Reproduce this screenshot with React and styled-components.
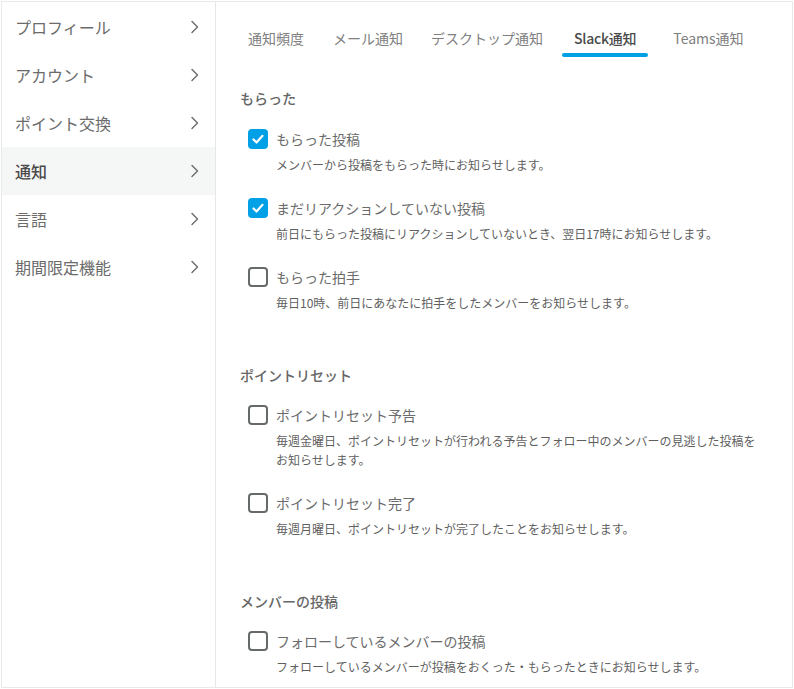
import React from "react";
import styled, { createGlobalStyle } from "styled-components";

const Global = createGlobalStyle`
  html, body { margin: 0; padding: 0; background: #fff; }
  body { font-family: "Noto Sans CJK JP", "Noto Sans", sans-serif; color: #5f5f5f; }
`;
const Frame = styled.div`
  box-sizing: border-box; width: 792px; height: 687px; margin: 1px 0 0 1px;
  border: 1px solid #e8e9e9; display: flex; overflow: hidden;
`;
const Side = styled.nav`
  box-sizing: border-box; width: 214px; flex: none; border-right: 1px solid #e6e7e7; padding-top: 1px;
`;
const SideItem = styled.div`
  height: 48px; display: flex; align-items: center; justify-content: space-between;
  padding: 0 15px 0 13px; font-size: 16px; line-height: 24px;
  font-weight: ${p => (p.$active ? 500 : 400)};
  color: ${p => (p.$active ? "#4a4a4a" : "#6b6b6b")};
  background: ${p => (p.$active ? "#f5f6f6" : "transparent")};
`;
const Main = styled.main`flex: 1; min-width: 0; padding: 0 24px;`;
const Tabs = styled.div`display: flex; height: 55px; margin-left: -2px;`;
const Tab = styled.div`
  box-sizing: border-box; height: 55px; padding: 26px ${p => p.$pr}px 0 ${p => p.$pl}px; font-size: 14px; line-height: 20px;
  font-weight: ${p => (p.$active ? 500 : 400)}; color: ${p => (p.$active ? "#4a4a4a" : "#808080")};
  letter-spacing: ${p => (p.$active ? "-0.25px" : "0")};
  white-space: nowrap; position: relative;
`;
const Bar = styled.span`
  position: absolute; left: 0; right: 0; bottom: 0; height: 4px; border-radius: 2px; background: #00a0e6;
`;
const Title = styled.h2`
  margin: 0 0 20px; padding-top: 32px; font-size: 14px; line-height: 20px; font-weight: 500; color: #666;
`;
const Section = styled.section`
  margin-bottom: 21px;
  &:first-of-type ${Title} { padding-top: 31px; margin-bottom: 21px; }
`;
const Options = styled.div`display: flex; flex-direction: column; gap: 24px;`;
const Option = styled.div`
  display: grid; grid-template-columns: 20px 1fr; column-gap: 8px; margin-left: 8px;
`;
const Box = styled.span`
  box-sizing: border-box; width: 20px; height: 20px; border-radius: 4px; display: flex; align-items: center; justify-content: center;
  background: ${p => (p.$on ? "#00a0e6" : "#fff")};
  border: ${p => (p.$on ? "none" : "2px solid #666a6a")};
`;
const Label = styled.div`font-size: 14px; line-height: 20px; color: #6b6b6b;`;
const Desc = styled.p`
  grid-column: 2; margin: 6px 0 0; font-size: 12px; line-height: 19px; color: #5f5f5f; max-width: 482px;
`;
const Chevron = () => (
  <svg width="10" height="14" viewBox="0 0 10 14" fill="none" stroke="#6a6a6a" strokeWidth="1.4" strokeLinecap="round" strokeLinejoin="round">
    <path d="M2 1.5 7.5 7 2 12.5" />
  </svg>
);
const Check = () => (
  <svg width="14" height="14" viewBox="0 0 14 14" fill="none" stroke="#fff" strokeWidth="2.2" strokeLinecap="round" strokeLinejoin="round">
    <path d="M2.5 7.5 5.5 10.5 11.5 3.8" />
  </svg>
);
const menu = ["プロフィール", "アカウント", "ポイント交換", "通知", "言語", "期間限定機能"];
const tabs = [["通知頻度",10,14],["メール通知",15,14],["デスクトップ通知",14,19],["Slack通知",12,12,true],["Teams通知",25,0]];
const sections = [
  { title: "もらった", items: [
    ["もらった投稿", "メンバーから投稿をもらった時にお知らせします。", true],
    ["まだリアクションしていない投稿", "前日にもらった投稿にリアクションしていないとき、翌日17時にお知らせします。", true],
    ["もらった拍手", "毎日10時、前日にあなたに拍手をしたメンバーをお知らせします。"],
  ]},
  { title: "ポイントリセット", items: [
    ["ポイントリセット予告", "毎週金曜日、ポイントリセットが行われる予告とフォロー中のメンバーの見逃した投稿をお知らせします。"],
    ["ポイントリセット完了", "毎週月曜日、ポイントリセットが完了したことをお知らせします。"],
  ]},
  { title: "メンバーの投稿", items: [
    ["フォローしているメンバーの投稿", "フォローしているメンバーが投稿をおくった・もらったときにお知らせします。"],
  ]},
];
export default function App() {
  return (
    <>
      <Global />
      <Frame>
        <Side>
          {menu.map((m, i) => (
            <SideItem key={m} $active={i === 3}>{m}<Chevron /></SideItem>
          ))}
        </Side>
        <Main>
          <Tabs>
            {tabs.map(([t, l, r, a]) => (
              <Tab key={t} $pl={l} $pr={r} $active={a}>{t}{a && <Bar />}</Tab>
            ))}
          </Tabs>
          {sections.map(s => (
            <Section key={s.title}>
              <Title>{s.title}</Title>
              <Options>
                {s.items.map(([l, d, on]) => (
                  <Option key={l}>
                    <Box $on={on}>{on && <Check />}</Box>
                    <Label>{l}</Label>
                    <Desc>{d}</Desc>
                  </Option>
                ))}
              </Options>
            </Section>
          ))}
        </Main>
      </Frame>
    </>
  );
}
